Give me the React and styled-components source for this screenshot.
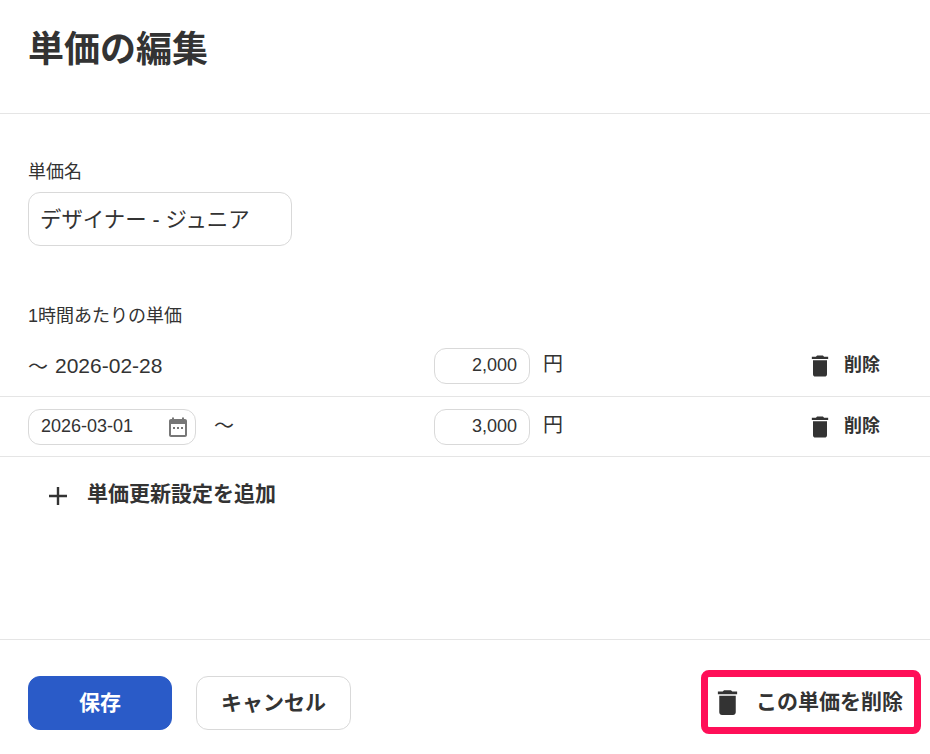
import React from "react";
import styled, { createGlobalStyle } from "styled-components";

const GlobalStyle = createGlobalStyle`
  html, body {
    margin: 0;
    padding: 0;
    background: #fff;
  }
  body {
    font-family: "Liberation Sans", "Noto Sans CJK JP", sans-serif;
    color: #333;
  }
`;

const TrashIcon = ({ size = 28 }) => (
  <svg width={size} height={size} viewBox="0 0 24 24" fill="#333">
    <path d="M6 19c0 1.1.9 2 2 2h8c1.1 0 2-.9 2-2V7H6v12zM19 4h-3.5l-1-1h-5l-1 1H5v2h14V4z" />
  </svg>
);

const CalendarIcon = () => (
  <svg width="24" height="24" viewBox="0 0 24 24" fill="#777">
    <path d="M19 4h-1V2.5h-2V4H8V2.5H6V4H5c-1.1 0-2 .9-2 2v14c0 1.1.9 2 2 2h14c1.1 0 2-.9 2-2V6c0-1.1-.9-2-2-2zm0 16H5V9h14v11z" />
    <path d="M7 12h2v2H7zM11 12h2v2h-2zM15 12h2v2h-2z" />
  </svg>
);

const PlusIcon = () => (
  <svg width="20" height="20" viewBox="0 0 20 20" fill="#333">
    <path d="M8.8 1h2.4v7.8H19v2.4h-7.8V19H8.8v-7.8H1V8.8h7.8z" />
  </svg>
);

const Page = styled.div`
  width: 930px;
  height: 754px;
  display: flex;
  flex-direction: column;
  overflow: hidden;
`;

const Header = styled.header`
  height: 113px;
  box-sizing: content-box;
  padding: 0 28px;
  border-bottom: 1px solid #e5e5e5;
`;

const Title = styled.h1`
  margin: 0;
  padding-top: 24px;
  font-size: 36px;
  line-height: 52px;
  font-weight: 700;
`;

const Body = styled.main`
  flex: 1;
  padding-top: 45px;
`;

const Label = styled.div`
  padding-left: 28px;
  font-size: 18px;
  line-height: 26px;
`;

const NameInput = styled.div`
  box-sizing: border-box;
  width: 264px;
  height: 54px;
  margin: 7px 0 0 28px;
  padding: 0 11px 4px;
  display: flex;
  align-items: center;
  border: 1px solid #d9d9d9;
  border-radius: 12px;
  font-size: 21.4px;
`;

const RateLabel = styled(Label)`
  margin-top: 57px;
`;

const Row = styled.div`
  box-sizing: border-box;
  display: grid;
  grid-template-columns: 406px 96px 1fr auto;
  align-items: center;
  height: ${(p) => p.$height}px;
  padding: ${(p) => p.$top}px 50px 0 28px;
  border-bottom: 1px solid #e5e5e5;
`;

const Period = styled.div`
  display: flex;
  align-items: center;
  font-size: 21px;
`;

const Tilde = styled.span`
  margin: ${(p) => (p.$after ? "0 0 4px 18px" : "0 7px 0 0")};
  font-size: 20px;
`;

const DateField = styled.div`
  box-sizing: border-box;
  width: 168px;
  height: 36px;
  padding: 0 5px 0 12px;
  display: flex;
  align-items: center;
  justify-content: space-between;
  border: 1px solid #d9d9d9;
  border-radius: 12px;
  font-size: 18px;
`;

const AmountInput = styled.div`
  box-sizing: border-box;
  width: 96px;
  height: 36px;
  padding: 0 12px;
  display: flex;
  align-items: center;
  justify-content: flex-end;
  border: 1px solid #d9d9d9;
  border-radius: 12px;
  font-size: 18px;
`;

const Unit = styled.span`
  margin: 0 0 6px 13px;
  font-size: 20px;
`;

const RowDelete = styled.div`
  display: flex;
  align-items: center;
  gap: 10px;
  font-size: 18px;
  font-weight: 700;
`;

const RaisedText = styled.span`
  margin-bottom: ${(p) => p.$by}px;
`;

const AddRow = styled.div`
  display: flex;
  align-items: center;
  gap: 19px;
  padding: 25px 0 0 48px;
  font-size: 21px;
  line-height: 24px;
  font-weight: 700;
`;

const Footer = styled.footer`
  box-sizing: border-box;
  height: 115px;
  padding: 12px 9px 0 28px;
  display: flex;
  align-items: center;
  border-top: 1px solid #e5e5e5;
`;

const Button = styled.div`
  box-sizing: border-box;
  width: ${(p) => p.$width}px;
  height: 54px;
  margin-right: 24px;
  padding-bottom: 4px;
  display: flex;
  align-items: center;
  justify-content: center;
  border: 1px solid ${(p) => (p.$primary ? "#2a5bc8" : "#d9d9d9")};
  border-radius: 12px;
  background: ${(p) => (p.$primary ? "#2a5bc8" : "#fff")};
  color: ${(p) => (p.$primary ? "#fff" : "#333")};
  font-size: 21px;
  font-weight: 700;
`;

const DeleteAll = styled.div`
  box-sizing: border-box;
  width: 220px;
  height: 64px;
  margin: 0 0 2px auto;
  padding-left: 3px;
  display: flex;
  align-items: center;
  gap: 12px;
  border: 7px solid #ff0f58;
  border-radius: 8px;
  font-size: 21px;
  font-weight: 700;
  white-space: nowrap;
`;

export default function App() {
  return (
    <Page>
      <GlobalStyle />
      <Header>
        <Title>単価の編集</Title>
      </Header>
      <Body>
        <Label>単価名</Label>
        <NameInput>デザイナー - ジュニア</NameInput>
        <RateLabel>1時間あたりの単価</RateLabel>
        <Row $height={68} $top={6}>
          <Period>
            <Tilde>～</Tilde>2026-02-28
          </Period>
          <AmountInput>2,000</AmountInput>
          <Unit>円</Unit>
          <RowDelete>
            <TrashIcon />
            <RaisedText $by={5}>削除</RaisedText>
          </RowDelete>
        </Row>
        <Row $height={60} $top={0}>
          <Period>
            <DateField>
              2026-03-01
              <CalendarIcon />
            </DateField>
            <Tilde $after>～</Tilde>
          </Period>
          <AmountInput>3,000</AmountInput>
          <Unit>円</Unit>
          <RowDelete>
            <TrashIcon />
            <RaisedText $by={6}>削除</RaisedText>
          </RowDelete>
        </Row>
        <AddRow>
          <PlusIcon />
          <RaisedText $by={4}>単価更新設定を追加</RaisedText>
        </AddRow>
      </Body>
      <Footer>
        <Button $primary $width={144}>
          保存
        </Button>
        <Button $width={155}>キャンセル</Button>
        <DeleteAll>
          <TrashIcon size={33} />
          <RaisedText $by={4}>この単価を削除</RaisedText>
        </DeleteAll>
      </Footer>
    </Page>
  );
}
